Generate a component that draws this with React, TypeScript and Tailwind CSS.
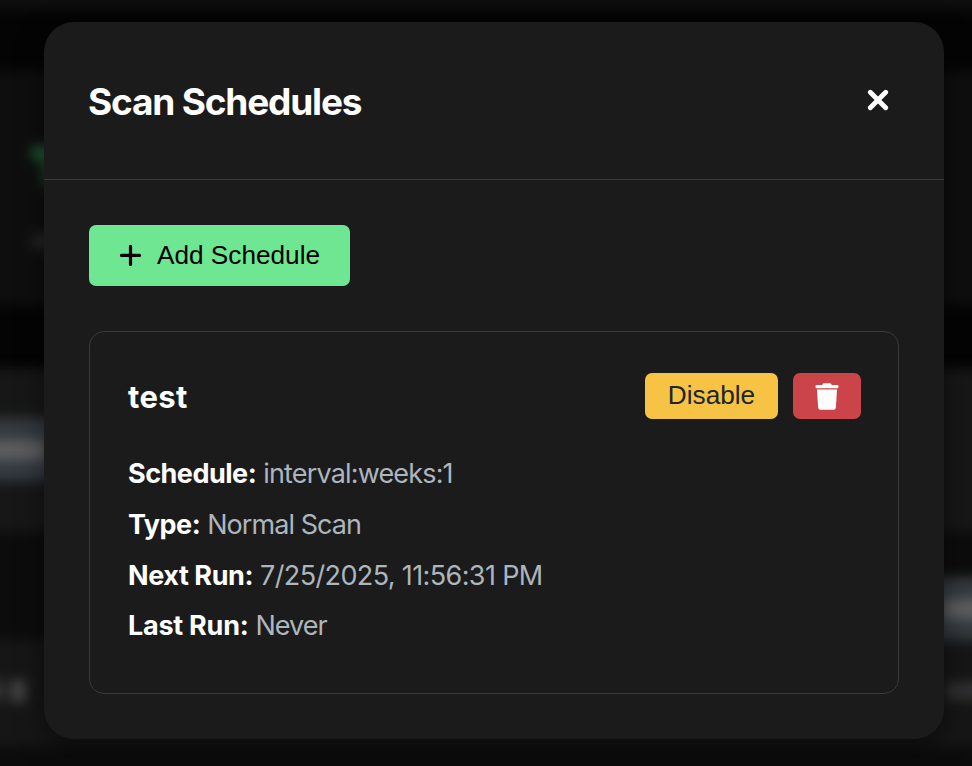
import type { ReactNode } from "react";

const rows = [
  { label: "Schedule:", value: "interval:weeks:1", labelTrack: "tracking-[-0.5px]", valueTrack: "tracking-[-0.83px]" },
  { label: "Type:", value: "Normal Scan", labelTrack: "tracking-[-0.5px]", valueTrack: "tracking-[-0.95px]" },
  { label: "Next Run:", value: "7/25/2025, 11:56:31 PM", labelTrack: "tracking-[-0.42px]", valueTrack: "tracking-[-0.62px]" },
  { label: "Last Run:", value: "Never", labelTrack: "tracking-[-0.25px]", valueTrack: "tracking-[-0.95px]" },
];

function Icon({ className, children, viewBox }: { className: string; children: ReactNode; viewBox: string }) {
  return (
    <svg className={className} viewBox={viewBox} fill="none" stroke="currentColor" aria-hidden="true">
      {children}
    </svg>
  );
}

// The dimmed, out-of-focus dashboard that the dialog covers.
function Backdrop() {
  return (
    <div aria-hidden="true" className="absolute -inset-8 flex flex-col blur-[6px]">
      <div className="h-[42px] bg-[#0f0f0f]" />
      <div className="mt-[60px] h-[236px] bg-[#0e0e0e] pl-[64px] pt-[76px]">
        <div className="h-[14px] w-10 bg-[#1f5c35]" />
        <div className="ml-[10px] h-[26px] w-8 bg-[#1a4a2b]" />
        <div className="mt-[47px] h-[16px] w-10 bg-[#262628]" />
      </div>
      <div className="mt-[62px] h-[164px] bg-[#171717] pt-[50px]">
        <div className="flex h-[63px] w-[92px] items-center bg-[#343a40] pl-4">
          <div className="h-[20px] w-[64px] bg-[#5e5e5f]" />
        </div>
      </div>
      <div className="flex h-[108px] items-end justify-end bg-[#0c0c0c]">
        <div className="-mb-[1px] flex h-[64px] w-[70px] items-center bg-[#343a40] pl-2">
          <div className="h-[20px] w-[62px] bg-[#5e5e5f]" />
        </div>
      </div>
      <div className="flex h-[106px] items-center justify-between bg-[#161616] pb-[4px] pl-5">
        <div className="flex gap-2">
          <div className="h-[20px] w-[14px] bg-[#3b3b3d]" />
          <div className="h-[22px] w-[16px] bg-[#424244]" />
        </div>
        <div className="h-[18px] w-[59px] bg-[#303032]" />
      </div>
      <div className="grow bg-[#0c0c0c]" />
    </div>
  );
}

export default function App() {
  return (
    <div className="relative flex h-[766px] w-[972px] overflow-hidden bg-[#040404] pl-[44px] pt-[22px] font-['Inter','Liberation_Sans',sans-serif] text-white">
      <Backdrop />
      <main className="relative h-[717px] w-[900px] rounded-[30px] bg-[#1b1b1b] shadow-[0_8px_28px_rgba(0,0,0,0.5)]">
        <header className="flex h-[158px] items-center justify-between border-b border-[#3a3a3b] pl-[44px] pr-[55px]">
          <h1 className="pt-[2px] text-[37px] font-bold leading-[44px] tracking-[-1.18px]">Scan Schedules</h1>
          <button aria-label="Close" className="mb-px">
            <Icon className="size-[22px]" viewBox="0 0 22 22">
              <path d="M3.3 3.3 18.7 18.7M18.7 3.3 3.3 18.7" strokeWidth="4.8" strokeLinecap="round" />
            </Icon>
          </button>
        </header>
        <section className="px-[45px] pt-[45px]">
          <button className="flex h-[61px] w-[261px] items-center rounded-[7px] bg-[#6fe691] pl-[30px] font-['Liberation_Sans',sans-serif] text-[26.2px] text-black">
            <Icon className="mr-[15px] size-[23px] shrink-0" viewBox="0 0 23 23">
              <path d="M11.5 2.4v18M2.5 11.4h18" strokeWidth="3.2" strokeLinecap="round" />
            </Icon>
            <span className="whitespace-nowrap">Add Schedule</span>
          </button>
          <article className="mt-[45px] h-[363px] rounded-[15px] border border-[#37393c] pl-[38px] pr-[37px] pt-[41px]">
            <div className="flex h-[46px] justify-between">
              <h2 className="pt-[2px] text-[31px] font-bold leading-[43px] tracking-[0.35px]">test</h2>
              <div className="flex gap-[15px]">
                <button className="h-[46px] w-[133px] rounded-[7px] bg-[#f6c344] pb-px font-['Liberation_Sans',sans-serif] text-[26.2px] leading-[45px] text-[#212529]">Disable</button>
                <button aria-label="Delete" className="flex h-[46px] w-[68px] items-center justify-center rounded-[7px] bg-[#cb444a]">
                  <svg className="h-[27px] w-[24px]" viewBox="0 0 24 27" fill="currentColor" aria-hidden="true">
                    <path d="M1.8 2H7.3Q7.6.2 9 .2h6q1.4 0 1.7 1.8h5.5q1.3 0 1.3 1.3v.8q0 1.2-1.3 1.2H1.8Q.5 5.3.5 4.1v-.8Q.5 2 1.8 2ZM2 6.5h20l-1.1 17.4q-.2 2.9-3.1 2.9H6.2q-2.9 0-3.1-2.9Z" />
                  </svg>
                </button>
              </div>
            </div>
            <dl className="mt-[30.2px]">
              {rows.map((r) => (
                <div key={r.label} className="flex h-[50.65px] items-center whitespace-nowrap text-[27px]">
                  <dt className={`font-bold ${r.labelTrack}`}>{r.label}</dt>
                  <dd className={`ml-[7px] text-[#adb5bd] ${r.valueTrack}`}>{r.value}</dd>
                </div>
              ))}
            </dl>
          </article>
        </section>
      </main>
    </div>
  );
}
